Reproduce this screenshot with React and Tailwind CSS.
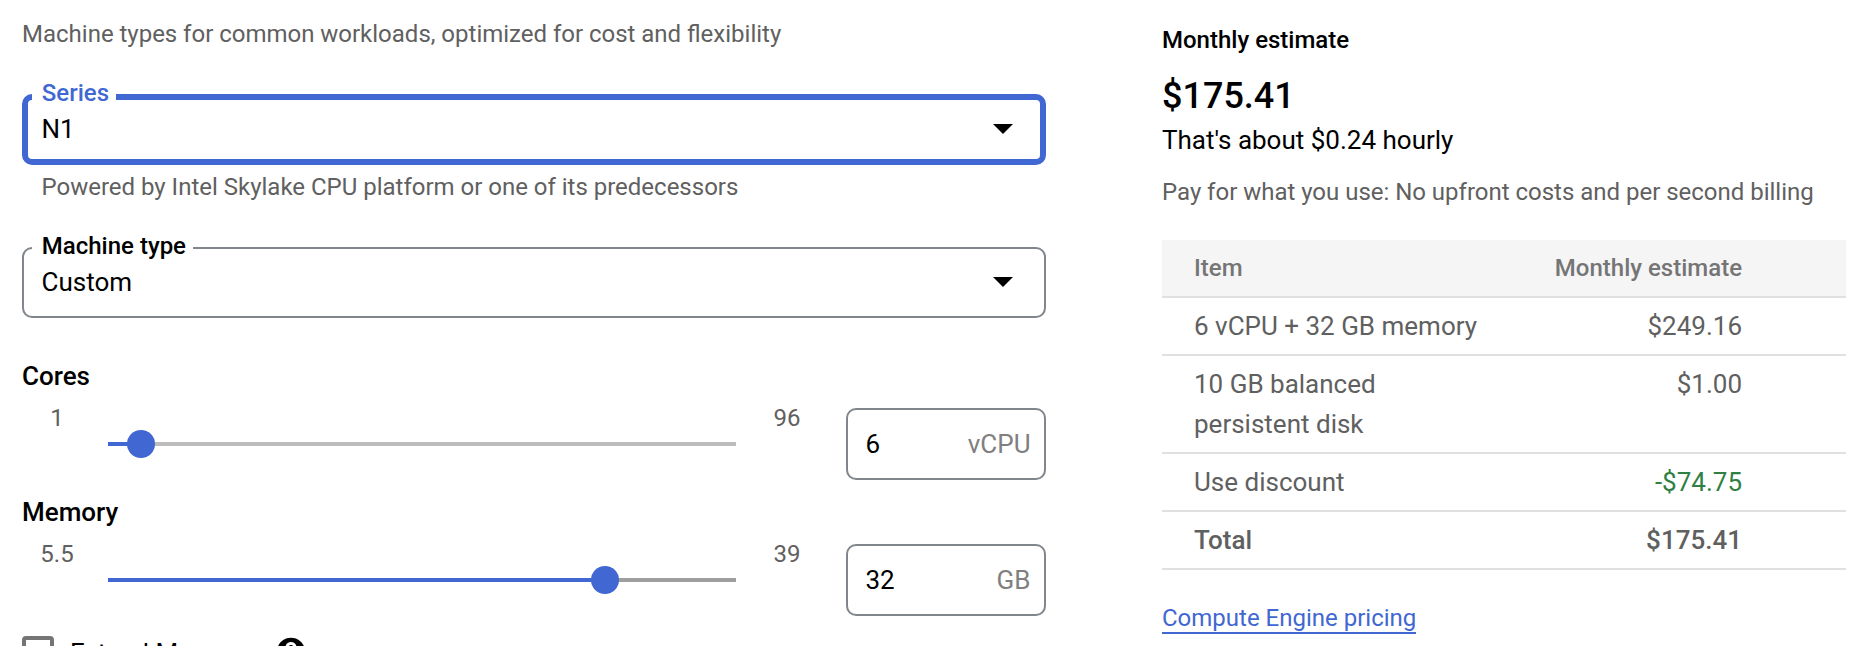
import { MdHelp } from "react-icons/md";

function Select({ label, value, focused }) {
  return (
    <div className="relative h-[71px] w-[1024px]">
      <div
        className={
          focused
            ? "flex h-[71px] items-center justify-between rounded-[10px] border-[6px] border-[#4167d2] pr-[27px] pl-[13.5px]"
            : "flex h-[71px] items-center justify-between rounded-[10px] border-2 border-[#80868b] pr-[31px] pl-[17.5px]"
        }
      >
        <span className="pb-[2px] text-[26px] leading-[32px] text-black">{value}</span>
        <svg className="mb-[1px] h-[10px] w-5" viewBox="0 0 20 10">
          <path d="M0 0H20L10 10Z" fill="#000" />
        </svg>
      </div>
      <span
        className={
          focused
            ? "absolute -top-[16px] left-[10px] bg-white pr-[7px] pl-[9.8px] text-[24px] leading-[30px] font-medium text-[#4167d2]"
            : "absolute -top-[16px] left-[10px] bg-white pr-[7px] pl-[9.8px] text-[24px] leading-[30px] font-medium text-black"
        }
      >
        {label}
      </span>
    </div>
  );
}

function SliderRow({ title, min, max, value, unit, percent, track }) {
  return (
    <section className="h-[136px]">
      <h3 className="h-[52px] text-[26px] leading-[40px] font-medium text-black">{title}</h3>
      <div className="flex h-[72px]">
        <span className="-mt-[6px] w-[70px] text-center text-[24px] leading-[32px] text-[#5f6060]">{min}</span>
        <div className="ml-4 flex h-[72px] w-[628px] items-center">
          <div className={"relative h-1 w-full " + track}>
            <div className="h-1 bg-[#4167d2]" style={{ width: percent + "%" }} />
            <div
              className="absolute -top-3 -ml-[14px] size-7 rounded-full bg-[#4167d2]"
              style={{ left: percent + "%" }}
            />
          </div>
        </div>
        <span className="-mt-[6px] ml-4 w-[70px] text-center text-[24px] leading-[32px] text-[#5f6060]">{max}</span>
        <div className="ml-6 flex h-[72px] w-[200px] items-center justify-between rounded-[10px] border-2 border-[#80868b] pr-[13.5px] pl-[17.5px] text-[26px]">
          <span className="text-black">{value}</span>
          <span className="text-[#808080]">{unit}</span>
        </div>
      </div>
    </section>
  );
}

const rows = [
  { item: "6 vCPU + 32 GB memory", cost: "$249.16", tone: "" },
  { item: "10 GB balanced persistent disk", cost: "$1.00", tone: "" },
  { item: "Use discount", cost: "-$74.75", tone: "text-[#2f8043]" },
];

export default function App() {
  return (
    <div className="flex h-[646px] w-[1850px] overflow-hidden bg-white font-['Roboto',sans-serif]">
      <main className="w-[1024px] ml-[22px] shrink-0 pt-[17px]">
        <p className="h-[77px] text-[24px] leading-[34px] [word-spacing:-0.1px] text-[#5f6060]">
          Machine types for common workloads, optimized for cost and flexibility
        </p>
        <Select label="Series" value="N1" focused />
        <p className="h-[82px] pt-[5px] pl-[19.5px] text-[24px] leading-[34px] [word-spacing:-0.05px] text-[#5f6060]">
          Powered by Intel Skylake CPU platform or one of its predecessors
        </p>
        <Select label="Machine type" value="Custom" />
        <div className="pt-[38px]">
          <SliderRow title="Cores" min="1" max="96" value="6" unit="vCPU" percent={5.26} track="bg-[#bdbdbd]" />
          <SliderRow title="Memory" min="5.5" max="39" value="32" unit="GB" percent={79.1} track="bg-[#9e9e9e]" />
        </div>
        <div className="mt-[8px] flex h-8 items-center">
          <span className="size-8 rounded-[4px] border-4 border-[#757575]" />
          <span className="ml-[16px] w-[182px] pt-[1px] text-[26px] leading-8 whitespace-nowrap text-black">
            Extend Memory
          </span>
          <MdHelp className="ml-[22px] size-[34px] text-black" />
        </div>
      </main>
      <aside className="ml-[116px] w-[684px] shrink-0 pt-[24px]">
        <h2 className="text-[24px] leading-[32px] font-medium text-black">Monthly estimate</h2>
        <p className="mt-[19px] text-[36px] leading-[42px] font-medium text-black">$175.41</p>
        <p className="mt-[7px] text-[26px] leading-[32px] text-black">That's about $0.24 hourly</p>
        <p className="mt-[19px] text-[24px] leading-[34px] [word-spacing:-0.08px] text-[#5f6060]">
          Pay for what you use: No upfront costs and per second billing
        </p>
        <table className="mt-[31px] w-[684px] border-separate border-spacing-0 text-[26px] leading-[40px] text-[#5f6060]">
          <thead>
            <tr className="bg-[#f5f5f5] text-[24px] text-[#757575]">
              <th className="h-[58px] w-[340px] border-b-2 border-[#e0e0e0] p-0 pl-8 text-left font-medium">Item</th>
              <th className="border-b-2 border-[#e0e0e0] p-0 pr-[104px] text-right font-medium">Monthly estimate</th>
            </tr>
          </thead>
          <tbody>
            {rows.map((r) => (
              <tr key={r.item} className="align-top">
                <td className="border-b-2 border-[#e0e0e0] py-2 pr-5 pl-8">{r.item}</td>
                <td className={"border-b-2 border-[#e0e0e0] py-2 pr-[104px] text-right " + r.tone}>{r.cost}</td>
              </tr>
            ))}
            <tr className="font-medium">
              <td className="border-b-2 border-[#e0e0e0] py-2 pl-8">Total</td>
              <td className="border-b-2 border-[#e0e0e0] py-2 pr-[104px] text-right">$175.41</td>
            </tr>
          </tbody>
        </table>
        <a className="mt-[32px] inline-block h-[32px] border-b-2 border-[#4167d2] text-[24px] leading-[32px] text-[#4167d2]">
          Compute Engine pricing
        </a>
      </aside>
    </div>
  );
}
